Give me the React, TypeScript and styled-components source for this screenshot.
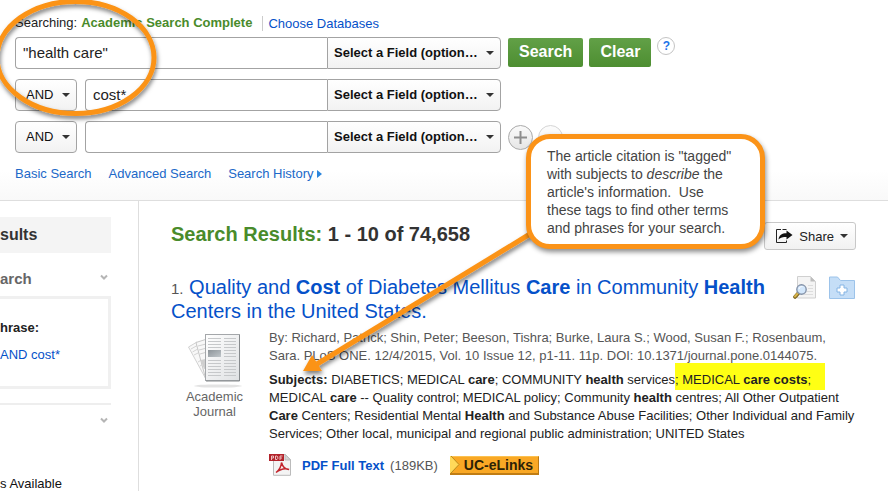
import React from 'react';
import styled, { createGlobalStyle, css } from 'styled-components';

const GlobalStyle = createGlobalStyle`
  *, *::before, *::after { box-sizing: border-box; }
  html, body { margin: 0; padding: 0; background: #fff; }
  body {
    font-family: "Liberation Sans", Arial, Helvetica, sans-serif;
    font-size: 13px;
    line-height: 18px;
    color: #222;
    overflow: hidden;
  }
  #root { height: 100vh; overflow: hidden; }
  button, input, select { font-family: inherit; }
`;

const blue = '#0551c9';
const green = '#498b2b';
const orange = '#fb9318';

const Page = styled.div`
  position: relative;
  min-height: 100vh;
  display: flex;
  flex-direction: column;
`;

/* ---------- search header ---------- */

const Header = styled.header`
  padding: 14px 16px 17px 15px;
  background: linear-gradient(#fff 85%, #f9f9f9);
  border-bottom: 1px solid #dedede;
  display: flex;
  flex-direction: column;
`;

const DatabaseLine = styled.div`
  display: flex;
  align-items: center;
  gap: 4px;
  height: 18px;
  margin-bottom: 5px;
`;

const DatabaseName = styled.strong`
  color: ${green};
`;

const Link = styled.a`
  color: ${blue};
  text-decoration: none;
`;

const DividedLink = styled(Link)`
  border-left: 1px solid #ccc;
  margin-left: 6px;
  padding-left: 5px;
  line-height: 15px;
`;

const SearchForm = styled.form`
  display: flex;
  flex-direction: column;
  gap: 10px;
`;

const SearchRow = styled.div`
  display: flex;
  align-items: flex-start;
`;

const controlFrame = css`
  height: 32px;
  border: 1px solid #a3a3a3;
  outline: none;
`;

const TermInput = styled.input<{ $wide?: boolean }>`
  ${controlFrame}
  width: ${p => (p.$wide ? 312 : 242)}px;
  border-right: 0;
  border-radius: 4px 0 0 4px;
  padding: 0 7px 2px;
  background: #fff;
  color: #222;
  font-size: 15px;
`;

const SelectBox = styled.span<{ $kind: 'operator' | 'field' }>`
  position: relative;
  display: flex;
  width: ${p => (p.$kind === 'operator' ? 62 : 174)}px;
  margin-right: ${p => (p.$kind === 'operator' ? 8 : 7)}px;

  select {
    ${controlFrame}
    appearance: none;
    width: 100%;
    margin: 0;
    border-radius: ${p => (p.$kind === 'operator' ? '4px' : '0 4px 4px 0')};
    padding: 0 ${p => (p.$kind === 'operator' ? 10 : 6)}px 2px;
    background: linear-gradient(#fff, #f2f2f2);
    color: #111;
    font-size: 13px;
    font-weight: ${p => (p.$kind === 'operator' ? 400 : 700)};
  }

  svg {
    position: absolute;
    right: 7px;
    top: 14px;
    pointer-events: none;
  }
`;

const GreenButton = styled.button`
  height: 29px;
  margin: 1px 6px 0 0;
  padding: 0 11px 2px;
  border: 0;
  border-radius: 2px;
  background: linear-gradient(#62a047, #4d8e31);
  color: #fff;
  font-size: 16px;
  font-weight: 700;
`;

const HelpButton = styled.button`
  width: 18px;
  height: 18px;
  margin: 0;
  padding: 0;
  border: 1px solid #c4c4c4;
  border-radius: 50%;
  background: #fff;
  color: #1d74e8;
  font-size: 12px;
  line-height: 15px;
  font-weight: 700;
`;

const RoundButton = styled.button<{ $faded?: boolean }>`
  display: flex;
  align-items: center;
  justify-content: center;
  width: 25px;
  height: 25px;
  margin: 4px 5px 0 0;
  padding: 0;
  border: 1px solid #aaa;
  border-radius: 50%;
  background: linear-gradient(#fafafa, #e6e6e6);
  opacity: ${p => (p.$faded ? 0.5 : 1)};
`;

const SearchNav = styled.nav`
  display: flex;
  gap: 17px;
  margin-top: 12px;

  a { color: #2068c8; }
`;

/* ---------- body ---------- */

const Body = styled.div`
  flex: 1;
  display: flex;
`;

const Sidebar = styled.aside`
  flex: none;
  width: 139px;
  padding: 16px 27px 0 0;
  border-right: 1px solid #dedede;
`;

const SidebarTitle = styled.h2`
  height: 36px;
  margin: 0 0 16px;
  background: #f4f4f4;
  font-size: 16px;
  line-height: 36px;
  color: #333;
`;

const FacetHeader = styled.div`
  display: flex;
  justify-content: space-between;
  align-items: flex-start;
  height: 27px;
  padding-right: 3px;

  svg { margin-top: 5px; }
`;

const FacetTitle = styled.h3`
  margin: 0;
  font-size: 15px;
  line-height: 20px;
  color: #666;
`;

const CurrentSearch = styled.div`
  height: 93px;
  margin-bottom: 14px;
  padding: 20px 0 0;
  border: solid #f0f0f0;
  border-width: 3px 3px 3px 0;
  display: flex;
  flex-direction: column;
  gap: 9px;
`;

const PhraseLabel = styled.strong`
  font-size: 13px;
`;

const FacetRule = styled.hr`
  height: 2px;
  margin: 0 0 7px;
  border: 0;
  background: #eee;
`;

const SidebarNote = styled.p`
  margin: 37px 0 0;
  font-size: 13px;
  line-height: 15px;
  color: #111;
`;

const Main = styled.main`
  flex: 1;
  min-width: 0;
  padding: 19px 28px 0 32px;
`;

const ResultsBar = styled.div`
  display: flex;
  justify-content: space-between;
  align-items: flex-start;
  margin-bottom: 25px;
`;

const ResultsTitle = styled.h1`
  margin: 0;
  font-size: 20px;
  line-height: 28px;
  color: #333;

  span { color: ${green}; }
`;

const ShareButton = styled.button`
  display: flex;
  align-items: center;
  gap: 6px;
  height: 28px;
  margin: 2px 4px 0 0;
  padding: 0 7px 0 10px;
  border: 1px solid #c8c8c8;
  border-radius: 3px;
  background: linear-gradient(#fff, #f1f1f1);
  color: #222;
  font-size: 13px;
`;

const ResultHead = styled.div`
  display: flex;
  justify-content: space-between;
  align-items: flex-start;
`;

const ResultTitle = styled.h2`
  margin: 0;
  font-size: 20px;
  font-weight: 400;
  line-height: 24px;
`;

const ResultNumber = styled.span`
  font-size: 15px;
  line-height: 15px;
  color: #555;
`;

const RecordActions = styled.div`
  display: flex;
  gap: 12px;
  padding: 1px 5px 0 0;
`;

const IconButton = styled.button`
  display: flex;
  padding: 0;
  border: 0;
  background: none;
`;

const Record = styled.div`
  display: flex;
  margin-top: 6px;
`;

const PublicationType = styled.div`
  flex: none;
  width: 98px;
  padding: 4px 11px 0 0;
  display: flex;
  flex-direction: column;
  align-items: center;
  font-size: 13px;
  line-height: 15px;
  text-align: center;
  color: #666;
`;

const Details = styled.div`
  flex: 1;
  min-width: 0;
`;

const Citation = styled.p`
  margin: 0 0 6px;
  color: #555;
`;

const Subjects = styled.p`
  margin: 0;
`;

const Highlight = styled.mark`
  background: #ffff14;
  color: inherit;
  padding: 9px 14px 3px 0;
`;

const FullText = styled.div`
  display: flex;
  align-items: center;
  margin-top: 11px;
`;

const PdfLink = styled(Link)`
  margin: 1px 6px 0 11px;
  font-weight: 700;
`;

const FileSize = styled.span`
  margin: 1px 12px 0 0;
  color: #555;
`;

const ELinks = styled.a`
  display: flex;
  align-items: center;
  height: 19px;
  padding-right: 5px;
  gap: 4px;
  background: #f9a825;
  border: solid;
  border-width: 1px 1px 2px 0;
  border-color: #fcc14e #b97812 #c07d14 #b97812;
  color: #2c2206;
  font-size: 14px;
  font-weight: 700;
  text-decoration: none;
`;

/* ---------- annotations over the page ---------- */

const Markup = styled.svg`
  position: absolute;
  left: 0;
  top: 0;
  overflow: visible;
  pointer-events: none;
`;

const Callout = styled.aside`
  position: absolute;
  left: 526px;
  top: 134px;
  width: 239px;
  padding: 8px 0 7px 16px;
  border: 5px solid ${orange};
  border-radius: 24px;
  background: #fff;
  box-shadow: 1px 3px 5px rgba(0, 0, 0, 0.45);
  color: #444;
  font-size: 14px;
  line-height: 18px;
`;

const Caret = () => (
  <svg width="8" height="4" viewBox="0 0 8 4" aria-hidden="true">
    <path d="M0 0h8L4 4z" fill="#333" />
  </svg>
);

const Chevron = () => (
  <svg width="8" height="7" viewBox="0 0 8 7" aria-hidden="true">
    <path d="M1 1.500 4 4.500 7 1.500" fill="none" stroke="#b5b5b5" strokeWidth="2" />
  </svg>
);

const JournalIcon = () => (
  <svg width="56" height="56" viewBox="0 0 56 56" aria-hidden="true">
    <defs>
      <linearGradient id="sheet" x1="0" y1="0" x2="1" y2="1">
        <stop offset="0" stopColor="#fff" />
        <stop offset="1" stopColor="#dfe1e3" />
      </linearGradient>
      <linearGradient id="photo" x1="0" y1="0" x2="1" y2="1">
        <stop offset="0" stopColor="#8d9499" />
        <stop offset="1" stopColor="#c0c6ca" />
      </linearGradient>
    </defs>
    <ellipse cx="31" cy="53" rx="24" ry="1.600" fill="#e3e3e3" />
    <path d="M1.500 14 10 9 30 43l-10 5z" fill="#f8f8f8" stroke="#d2d2d2" />
    <path d="M4 16l7-4M5.500 19l7-4M7 22l6-3M11 29l5-3M13 33l5-3" stroke="#d4d4d4" />
    <path d="M9 9.500 20 6 30 45 19 47z" fill="#f8f8f8" stroke="#c8c8c8" />
    <path d="M11 13l8-2M12 17l8-2M13 21l7-2" stroke="#d0d0d0" />
    <path d="M13.500 27l5-1 2.500 9-4 1z" fill="#cfcfcf" />
    <rect x="18.500" y="1.500" width="34" height="46" fill="url(#sheet)" stroke="#a4a7aa" />
    <path d="M52.500 2v46H19" fill="none" stroke="#85898c" />
    <path
      d="M21 5.500h13M21 8.500h13M21 11.500h13M21 14.500h13M37 5.500h12M37 8.500h12M37 11.500h12M37 14.500h12M37 17.500h12M37 20.500h12M37 23.500h12M21 27.500h13M21 30.500h13M21 33.500h13M21 36.500h13M21 39.500h13M21 42.500h13M37 27.500h12M37 30.500h12M37 33.500h12M37 36.500h12M37 39.500h12M37 42.500h12"
      stroke="#c6c8ca"
    />
    <rect x="21" y="17" width="13" height="7" fill="url(#photo)" />
  </svg>
);

const PdfIcon = () => (
  <svg width="22" height="22" viewBox="0 0 22 22" aria-hidden="true">
    <path d="M4.500.5h12l5 5v15.800h-17z" fill="#f4f4f4" stroke="#bbb" />
    <path d="M16 .5v5.500h5.500z" fill="#d5d5d5" stroke="#bbb" />
    <path d="M7 18.500c3-2 5.500-6.500 5.500-10 1.500 5.500 4 7 7.500 7-4-1.500-9 0-13 3z" fill="none" stroke="#c3262e" strokeWidth="1.500" />
    <rect width="15" height="7" fill="#b3232b" />
    <path d="M2.500 6V2h2v2h-2M6.500 2v3.500h1.500l.8-.8V2.800L8 2zM11 6V2h2.500M11 4h2" fill="none" stroke="#f3d0d0" strokeWidth=".9" />
  </svg>
);

const PreviewIcon = () => (
  <svg width="24" height="23" viewBox="0 0 24 23" aria-hidden="true">
    <path d="M4.500.5h13l5 5v16.500h-18z" fill="#f4f4f4" stroke="#d0d0d0" />
    <path d="M17.500.5v5h5z" fill="#bdbdbd" />
    <path d="M15 9.500h5M15 12.500h5M14 15.500h6M11 18.500h9" stroke="#ddd" />
    <path d="m2 21 3.500-4" stroke="#7d6420" strokeWidth="3.600" strokeLinecap="round" />
    <path d="m2 20.500 3.500-4" stroke="#d7b44a" strokeWidth="2" strokeLinecap="round" />
    <circle cx="8.500" cy="13.500" r="4.700" fill="#d3e7fb" stroke="#8492a8" strokeWidth="1.400" />
    <path d="M6 13c.5-2 2-2.500 3.500-2.500" fill="none" stroke="#fff" />
  </svg>
);

const FolderIcon = () => (
  <svg width="26" height="23" viewBox="0 0 26 23" aria-hidden="true">
    <path d="M.5 1h8l3 3.500h14v18H.5z" fill="#c5def7" stroke="#9cc3ea" />
    <path d="M11 9h4v3h3v4h-3v3h-4v-3H8v-4h3z" fill="#fff" stroke="#84b4e4" />
  </svg>
);

const ShareIcon = () => (
  <svg width="18" height="14" viewBox="0 0 18 14" aria-hidden="true">
    <path d="M6 .5H1.500v13h10V11.500M7.500.5h4" fill="none" stroke="#222" />
    <path d="M3.500 10.500C4 6 7 4.200 11.500 4.200V1.500L17.500 6l-6 4.500V8C8 8 5.500 8.500 3.500 10.500z" fill="#111" />
  </svg>
);

const FieldSelect = () => (
  <SelectBox $kind="field">
    <select aria-label="Select a Field">
      <option>Select a Field (option…</option>
    </select>
    <Caret />
  </SelectBox>
);

const OperatorSelect = () => (
  <SelectBox $kind="operator">
    <select aria-label="Operator">
      <option>AND</option>
    </select>
    <Caret />
  </SelectBox>
);

export default function App() {
  return (
    <>
      <GlobalStyle />
      <Page>
        <Header>
          <DatabaseLine>
            <span>Searching:</span>
            <DatabaseName>Academic Search Complete</DatabaseName>
            <DividedLink href="#databases">Choose Databases</DividedLink>
          </DatabaseLine>
          <SearchForm onSubmit={e => e.preventDefault()}>
            <SearchRow>
              <TermInput $wide aria-label="First term" defaultValue={'"health care"'} />
              <FieldSelect />
              <GreenButton type="submit">Search</GreenButton>
              <GreenButton type="reset">Clear</GreenButton>
              <HelpButton type="button" aria-label="Help">?</HelpButton>
            </SearchRow>
            <SearchRow>
              <OperatorSelect />
              <TermInput aria-label="Second term" defaultValue="cost*" />
              <FieldSelect />
            </SearchRow>
            <SearchRow>
              <OperatorSelect />
              <TermInput aria-label="Third term" />
              <FieldSelect />
              <RoundButton type="button" aria-label="Add row">
                <svg width="15" height="15" viewBox="0 0 15 15" aria-hidden="true">
                  <path d="M7.500 1v13M1 7.500h13" stroke="#8e8e8e" strokeWidth="2" />
                </svg>
              </RoundButton>
              <RoundButton type="button" aria-label="Remove row" $faded />
            </SearchRow>
          </SearchForm>
          <SearchNav>
            <Link href="#basic">Basic Search</Link>
            <Link href="#advanced">Advanced Search</Link>
            <Link href="#history">
              Search History{' '}
              <svg width="5" height="8" viewBox="0 0 5 8" aria-hidden="true">
                <path d="M0 0v8l5-4z" fill="#2a86dd" />
              </svg>
            </Link>
          </SearchNav>
        </Header>

        <Body>
          <Sidebar>
            <SidebarTitle>sults</SidebarTitle>
            <FacetHeader>
              <FacetTitle>arch</FacetTitle>
              <Chevron />
            </FacetHeader>
            <CurrentSearch>
              <PhraseLabel>hrase:</PhraseLabel>
              <Link href="#current">AND cost*</Link>
            </CurrentSearch>
            <FacetRule />
            <FacetHeader>
              <span />
              <Chevron />
            </FacetHeader>
            <SidebarNote>s Available</SidebarNote>
          </Sidebar>

          <Main>
            <ResultsBar>
              <ResultsTitle>
                <span>Search Results:</span> 1 - 10 of 74,658
              </ResultsTitle>
              <ShareButton type="button">
                <ShareIcon />
                Share
                <Caret />
              </ShareButton>
            </ResultsBar>

            <ResultHead>
              <ResultTitle>
                <ResultNumber>1.</ResultNumber>{' '}
                <Link href="#article">
                  Quality and <b>Cost</b> of Diabetes Mellitus <b>Care</b> in Community <b>Health</b>
                  <br />
                  Centers in the United States.
                </Link>
              </ResultTitle>
              <RecordActions>
                <IconButton type="button" aria-label="Preview"><PreviewIcon /></IconButton>
                <IconButton type="button" aria-label="Add to folder"><FolderIcon /></IconButton>
              </RecordActions>
            </ResultHead>

            <Record>
              <PublicationType>
                <JournalIcon />
                Academic
                <br />
                Journal
              </PublicationType>
              <Details>
                <Citation>
                  By: Richard, Patrick; Shin, Peter; Beeson, Tishra; Burke, Laura S.; Wood, Susan F.; Rosenbaum,
                  <br />
                  Sara. PLoS ONE. 12/4/2015, Vol. 10 Issue 12, p1-11. 11p. DOI: 10.1371/journal.pone.0144075.
                </Citation>
                <Subjects>
                  <b>Subjects:</b> DIABETICS; MEDICAL <b>care</b>; COMMUNITY <b>health</b> services
                  <Highlight>; MEDICAL <b>care costs</b>;</Highlight>
                  <br />
                  MEDICAL <b>care</b> -- Quality control; MEDICAL policy; Community <b>health</b> centres; All Other Outpatient
                  <br />
                  <b>Care</b> Centers; Residential Mental <b>Health</b> and Substance Abuse Facilities; Other Individual and Family
                  <br />
                  Services; Other local, municipal and regional public administration; UNITED States
                </Subjects>
                <FullText>
                  <PdfIcon />
                  <PdfLink href="#pdf">PDF Full Text</PdfLink>
                  <FileSize>(189KB)</FileSize>
                  <ELinks href="#elinks">
                    <svg width="10" height="17" viewBox="0 0 10 17" aria-hidden="true">
                      <path d="M0 0h1l8 8.500L1 17H0z" fill="#ffd95a" />
                      <path d="M1 0l8 8.500L1 17" fill="none" stroke="#b98a1c" />
                    </svg>
                    UC-eLinks
                  </ELinks>
                </FullText>
              </Details>
            </Record>
          </Main>
        </Body>

        <Markup width="560" height="400" viewBox="0 0 560 400" aria-hidden="true">
          <defs>
            <filter id="drop" x="-20%" y="-20%" width="140%" height="140%">
              <feDropShadow dx="1" dy="3" stdDeviation="2" floodOpacity="0.5" />
            </filter>
          </defs>
          <g filter="url(#drop)">
            <ellipse cx="75.500" cy="57.500" rx="78.500" ry="56" fill="none" stroke={orange} strokeWidth="5" />
            <path d="M530 234 317 364" stroke={orange} strokeWidth="5" />
            <path d="M303 371l9-16 10 16z" fill={orange} />
          </g>
        </Markup>
        <Callout>
          The article citation is "tagged"
          <br />
          with subjects to <em>describe</em> the
          <br />
          article's information.&nbsp; Use
          <br />
          these tags to find other terms
          <br />
          and phrases for your search.
        </Callout>
      </Page>
    </>
  );
}
